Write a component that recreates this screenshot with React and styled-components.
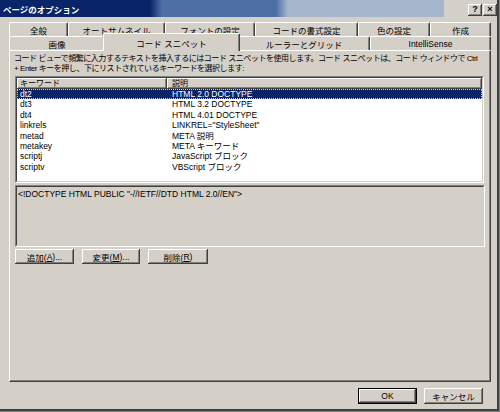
import React from "react"
import styled, { createGlobalStyle, css } from "styled-components"

const GlobalStyle = createGlobalStyle`
  html, body {
    margin: 0;
    padding: 0;
    background: #d4d0c8;
  }
  body {
    font-family: "Liberation Sans", "Noto Sans CJK JP", sans-serif;
    font-size: 8px;
    color: #000;
  }
`

const Window = styled.div`
  width: 500px;
  height: 412px;
  box-sizing: border-box;
  background: #d4d0c8;
  display: flex;
  flex-direction: column;
  box-shadow: inset -1px -1px #808080, inset -3px -3px #404040;
`

const TitleBar = styled.div`
  height: 17px;
  margin-right: 3px;
  display: flex;
  align-items: center;
  justify-content: space-between;
  padding-left: 3px;
  background: linear-gradient(
    90deg,
    #0a246a 0,
    #0a246a 150px,
    #4d6fa6 162px,
    #4d6fa6 276px,
    #a6b6cc 288px,
    #a6b6cc 444px,
    #d4d0c8 444px
  );
`

const Title = styled.span`
  color: #fff;
  font-weight: bold;
  font-size: 8.5px;
  white-space: nowrap;
`

const TitleButtons = styled.div`
  display: flex;
  gap: 1px;
  padding-top: 2px;
`

const TitleButton = styled.div`
  width: 14px;
  height: 12px;
  box-sizing: border-box;
  background: #d4d0c8;
  box-shadow: inset -1px -1px #404040, inset 1px 1px #fff, inset -2px -2px #808080;
  display: flex;
  align-items: center;
  justify-content: center;
  font-weight: bold;
  font-size: 9px;
  line-height: 1;
`

const Body = styled.div`
  padding: 5px 9px 0 9px;
  display: flex;
  flex-direction: column;
`

const TabRow = styled.div`
  display: flex;
  height: 14px;
  font-size: 8.5px;
`

const Tab = styled.div`
  box-sizing: border-box;
  width: ${p => p.$w}px;
  height: 100%;
  display: flex;
  align-items: center;
  justify-content: center;
  border-top: 1px solid #fff;
  border-left: 1px solid #fff;
  border-right: 1px solid #404040;
  box-shadow: inset -1px 0 #808080;
  border-radius: 2px 2px 0 0;
  white-space: nowrap;
  background: #d4d0c8;

  ${p =>
    p.$selected &&
    css`
      position: relative;
      z-index: 1;
      width: ${p.$w + 4}px;
      height: calc(100% + 4px);
      margin: -3px -2px -1px;
    `}
`

const Panel = styled.div`
  height: 332px;
  box-sizing: border-box;
  border-top: 1px solid #fff;
  border-left: 1px solid #fff;
  border-right: 1px solid #404040;
  border-bottom: 1px solid #404040;
  box-shadow: inset -1px -1px #808080;
  padding: 3px 0 0 5px;
  display: flex;
  flex-direction: column;
`

const Desc = styled.div`
  line-height: 10px;
  white-space: nowrap;
  letter-spacing: -0.45px;
  margin-left: -1px;
`

const Sunken = styled.div`
  width: ${p => p.$w}px;
  height: ${p => p.$h}px;
  box-sizing: border-box;
  margin-top: 2px;
  border-top: 1px solid #808080;
  border-left: 1px solid #808080;
  border-right: 1px solid #fff;
  border-bottom: 1px solid #fff;
`

const SunkenInner = styled.div`
  height: 100%;
  box-sizing: border-box;
  border-top: 1px solid #404040;
  border-left: 1px solid #404040;
  border-right: 1px solid #d4d0c8;
  border-bottom: 1px solid #d4d0c8;
  background: ${p => (p.$disabled ? "#d4d0c8" : "#fff")};
  overflow: hidden;
`

const Header = styled.div`
  display: flex;
  height: 11px;
`

const HeaderCell = styled.div`
  box-sizing: border-box;
  width: ${p => (p.$w ? `${p.$w}px` : "auto")};
  flex: ${p => (p.$w ? "none" : "1")};
  background: #d4d0c8;
  box-shadow: inset -1px -1px #404040, inset 1px 1px #fff, inset -2px -2px #808080;
  padding-left: ${p => p.$pad}px;
  line-height: 11px;
  white-space: nowrap;
`

const Row = styled.div`
  display: flex;
  height: 10.4px;
  line-height: 10.4px;
  font-size: 8.5px;
  white-space: nowrap;
  ${p =>
    p.$selected &&
    css`
      background: #0a246a;
      color: #fff;
      outline: 1px dotted #d4d0c8;
      outline-offset: -1px;
    `}
`

const Cell = styled.div`
  width: ${p => (p.$w ? `${p.$w}px` : "auto")};
  flex: ${p => (p.$w ? "none" : "1")};
  padding-left: ${p => p.$pad}px;
  box-sizing: border-box;
`

const Preview = styled.div`
  padding: 2px 0 0 1px;
  font-size: 8.5px;
  white-space: nowrap;
`

const ButtonRow = styled.div`
  display: flex;
  gap: ${p => p.$gap}px;
  margin-top: ${p => p.$top}px;
  justify-content: ${p => (p.$end ? "flex-end" : "flex-start")};
  padding-right: ${p => (p.$end ? 8 : 0)}px;
`

const Button = styled.div`
  width: ${p => p.$w}px;
  height: ${p => p.$h}px;
  box-sizing: border-box;
  background: #d4d0c8;
  display: flex;
  align-items: center;
  justify-content: center;
  white-space: nowrap;
  font-size: 8.5px;
  box-shadow: inset -1px -1px #404040, inset 1px 1px #fff, inset -2px -2px #808080;

  ${p =>
    p.$default &&
    css`
      border: 1px solid #000;
    `}
`

const backTabs = [
  ["全般", 59],
  ["オートサムネイル", 97],
  ["フォントの設定", 90],
  ["コードの書式設定", 103],
  ["色の設定", 72],
  ["作成", 61],
]

const frontTabs = [
  ["画像", 96],
  ["コード スニペット", 133, true],
  ["ルーラーとグリッド", 132],
  ["IntelliSense", 121],
]

const snippets = [
  ["dt2", "HTML 2.0 DOCTYPE"],
  ["dt3", "HTML 3.2 DOCTYPE"],
  ["dt4", "HTML 4.01 DOCTYPE"],
  ["linkrels", "LINKREL=\"StyleSheet\""],
  ["metad", "META 説明"],
  ["metakey", "META キーワード"],
  ["scriptj", "JavaScript ブロック"],
  ["scriptv", "VBScript ブロック"],
]

const App = () => (
  <Window>
    <GlobalStyle />
    <TitleBar>
      <Title>ページのオプション</Title>
      <TitleButtons>
        <TitleButton>?</TitleButton>
        <TitleButton>×</TitleButton>
      </TitleButtons>
    </TitleBar>
    <Body>
      <TabRow>
        {backTabs.map(([label, w]) => (
          <Tab key={label} $w={w}>
            {label}
          </Tab>
        ))}
      </TabRow>
      <TabRow>
        {frontTabs.map(([label, w, sel]) => (
          <Tab key={label} $w={w} $selected={sel}>
            {label}
          </Tab>
        ))}
      </TabRow>
      <Panel>
        <Desc>
          コード ビューで頻繁に入力するテキストを挿入するにはコード スニペットを使用します。コード スニペットは、コード ウィンドウで Ctrl
        </Desc>
        <Desc>+ Enter キーを押し、下にリストされているキーワードを選択します:</Desc>
        <Sunken $w={469} $h={107}>
          <SunkenInner>
            <Header>
              <HeaderCell $w={150} $pad={3}>
                キーワード
              </HeaderCell>
              <HeaderCell $pad={5}>説明</HeaderCell>
            </Header>
            {snippets.map(([key, desc], i) => (
              <Row key={key} $selected={i === 0}>
                <Cell $w={150} $pad={3}>
                  {key}
                </Cell>
                <Cell $pad={5}>{desc}</Cell>
              </Row>
            ))}
          </SunkenInner>
        </Sunken>
        <Sunken $w={470} $h={62}>
          <SunkenInner $disabled>
            <Preview>&lt;!DOCTYPE HTML PUBLIC "-//IETF//DTD HTML 2.0//EN"&gt;</Preview>
          </SunkenInner>
        </Sunken>
        <ButtonRow $gap={8} $top={2}>
          <Button $w={59} $h={15}>
            追加(<u>A</u>)...
          </Button>
          <Button $w={58} $h={15}>
            変更(<u>M</u>)...
          </Button>
          <Button $w={60} $h={15}>
            削除(<u>R</u>)
          </Button>
        </ButtonRow>
      </Panel>
      <ButtonRow $gap={7} $top={6} $end>
        <Button $w={59} $h={16} $default>
          OK
        </Button>
        <Button $w={59} $h={16}>
          キャンセル
        </Button>
      </ButtonRow>
    </Body>
  </Window>
)

export default App
